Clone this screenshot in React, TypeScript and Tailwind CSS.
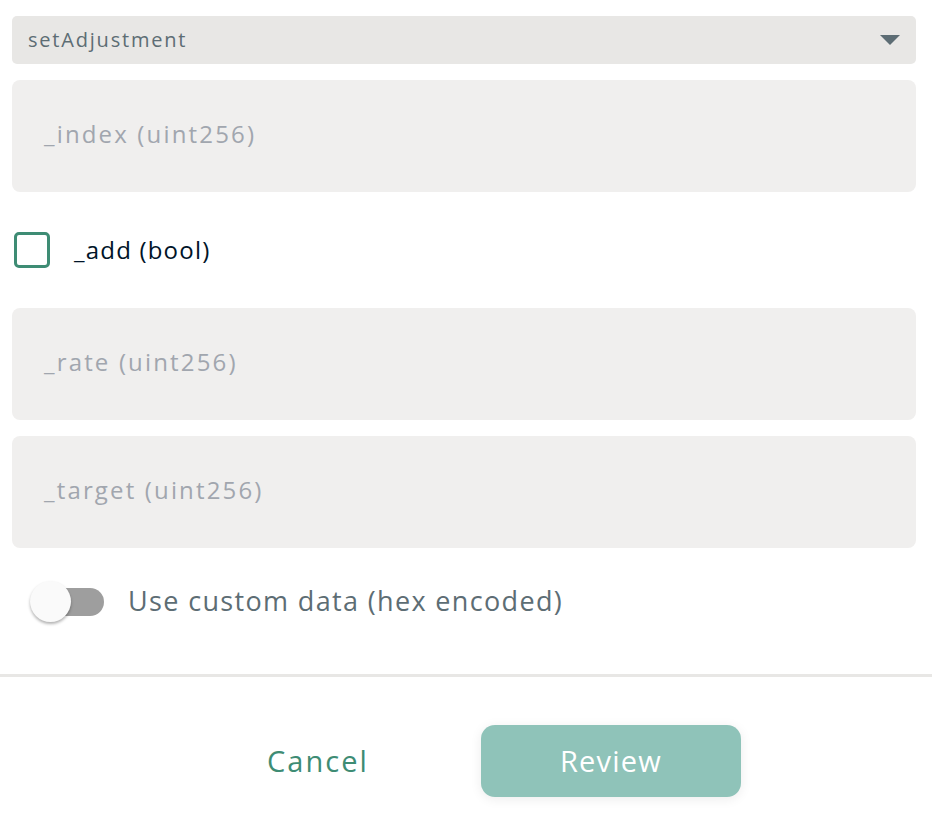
export default function App() {
  return (
    <div className="w-[932px] h-[822px] bg-white font-['Open_Sans','Noto_Sans',sans-serif] overflow-hidden">
      <div className="pl-3 pr-4 pt-4 flex flex-col">
        {/* method select */}
        <div className="h-12 rounded-[5px] bg-[#e8e7e5] flex items-center justify-between pl-4 pr-4">
          <span className="text-[20px] text-[#5d6d74] tracking-[0.09em]">setAdjustment</span>
          <svg width="20" height="10" viewBox="0 0 20 10">
            <path d="M0 0h20L10 10z" fill="#5d6d74" />
          </svg>
        </div>

        <Field label="_index (uint256)" className="mt-4" />

        <label className="mt-10 flex items-center gap-6 pl-[2px] h-9">
          <span className="w-9 h-9 rounded-[5px] border-[3px] border-[#3e8c74]" />
          <span className="text-[24px] text-[#001428] tracking-[0.05em]">_add (bool)</span>
        </label>

        <Field label="_rate (uint256)" className="mt-10" />
        <Field label="_target (uint256)" className="mt-4" />

        <div className="mt-8 flex items-center gap-6 pl-[18px] h-11">
          <div className="relative w-[74px] h-11 flex items-center">
            <span className="ml-[4px] w-[70px] h-7 rounded-full bg-[#9e9e9e]" />
            <span className="absolute left-0 top-[1px] w-[41px] h-[41px] rounded-full bg-[#fafafa] shadow-[0_2px_3px_rgba(0,0,0,0.3)]" />
          </div>
          <span className="text-[27px] text-[#5d6d74] leading-none -mt-1 tracking-[0.05em]">Use custom data (hex encoded)</span>
        </div>
      </div>

      <div className="mt-[50px] h-[3px] bg-[#e8e7e5]" />

      <div className="mt-12 flex items-center justify-center gap-[112px] pl-[76px]">
        <button className="text-[29px] text-[#3e8c74] tracking-[0.07em]">Cancel</button>
        <button className="w-[260px] h-[72px] rounded-[14px] bg-[#8fc3b9] text-white text-[29px] tracking-[0.04em] shadow-[0_2px_12px_rgba(0,0,0,0.08)]">
          Review
        </button>
      </div>
    </div>
  );
}

function Field({ label, className = "" }: { label: string; className?: string }) {
  return (
    <div className={`h-28 rounded-lg bg-[#f0efee] flex items-center pl-8 ${className}`}>
      <span className="text-[24px] text-[#a1a6ae] tracking-[0.09em] -mt-1">{label}</span>
    </div>
  );
}
